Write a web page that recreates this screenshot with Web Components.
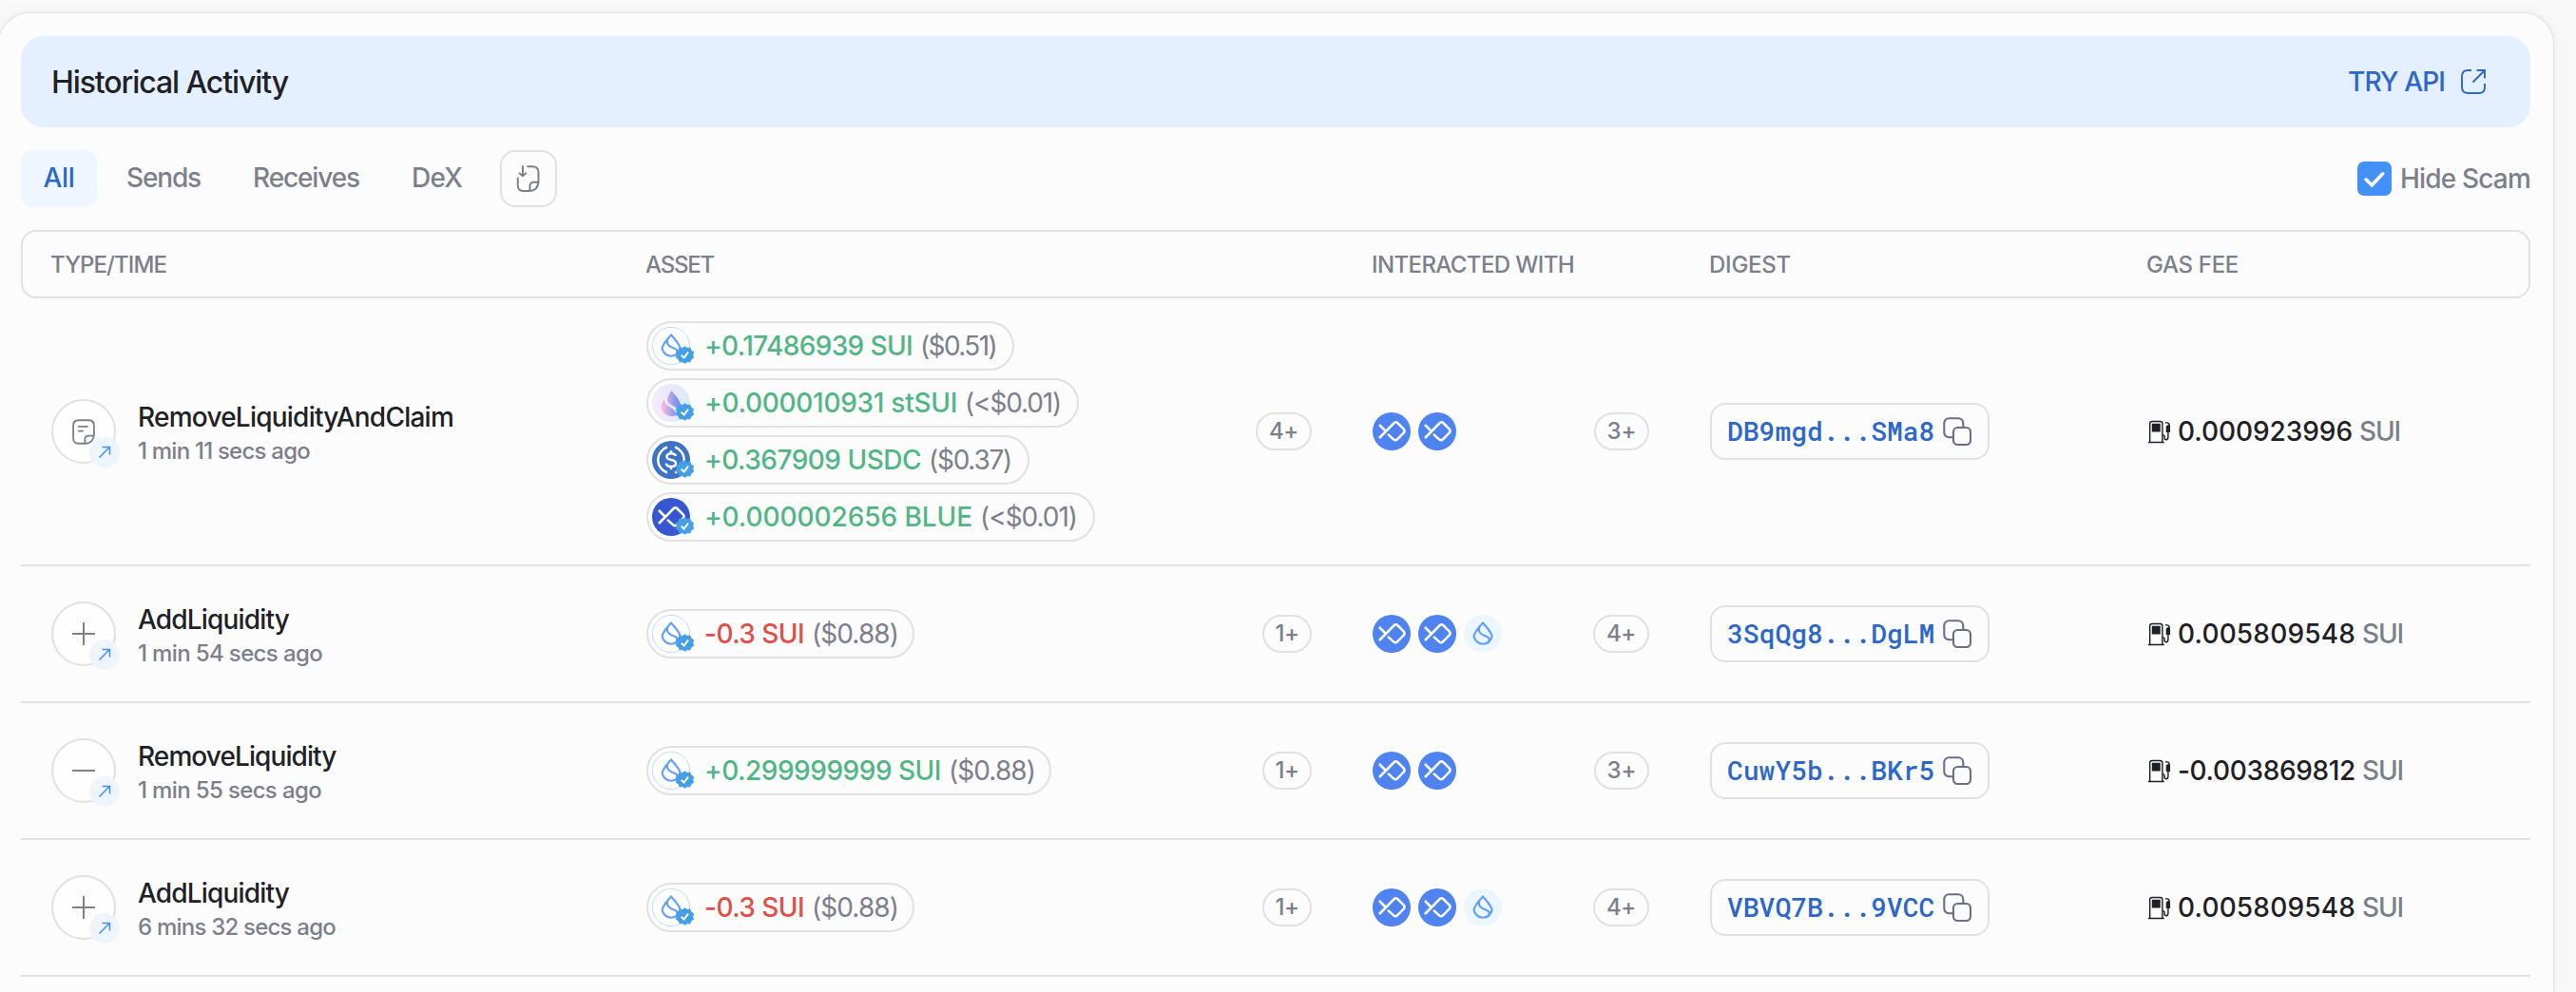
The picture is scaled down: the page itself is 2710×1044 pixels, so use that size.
<!DOCTYPE html>
<html lang="en">
<head>
<meta charset="utf-8">
<title>Historical Activity</title>
<style>
html{background:#f9f9fa}
body{margin:0;width:2710px;height:1044px;overflow:hidden;background:#f9f9fa;font-family:Inter,"Liberation Sans",sans-serif;font-weight:500;color:#1e2126}
</style>
</head>
<body>
<activity-panel></activity-panel>
<script>
const BLUE_FISH = `<path d="M7 13l7 7M7 27L22.800 11Q24.500 9.600 26.200 11L32.800 17.500Q34.400 19.500 32.800 21.500L26 28.300Q24 30 22 28.300L16 22.800" fill="none" stroke="#fff" stroke-width="2.500"/>`;
const DROP = `<path d="M20 8.300C16.500 12.900 11 18.100 10.600 22.700A9.600 9.400 0 0 0 29.600 22.700C29.200 18.100 23.500 12.900 20 8.300ZM16 13.500C14.500 22 24 21.500 26.300 24.500Q27.500 26.500 25.500 30" fill="none" stroke="#63a1f7" stroke-width="2.200" stroke-linejoin="round"/>`;
const ICONS = {
  note: ['0 0 28 32', `<g fill="none" stroke="#7d808b" stroke-width="2" stroke-linecap="round" stroke-linejoin="round"><path d="M8 2.500H20Q26 2.500 26 8.500V19C26 25 22 29.500 16 29.500H8Q2 29.500 2 23.500V8.500Q2 2.500 8 2.500Z"/><path d="M15.500 29.400V24.500Q15.500 20.500 19.500 20.500H25.800M8 9.700H18.500M8 15H13"/></g>`],
  plus: ['0 0 24 24', `<path d="M12 .8V23.200M.8 12H23.200" stroke="#7d808b" stroke-width="2" stroke-linecap="round"/>`],
  minus: ['0 0 24 24', `<path d="M.8 12H23.200" stroke="#7d808b" stroke-width="2" stroke-linecap="round"/>`],
  arrow: ['0 0 32 32', `<circle cx="16" cy="16" r="16" fill="#eef5ff"/><path d="M10.500 21.500L21.300 10.500M13.500 10.500H21.500V18.500" fill="none" stroke="#418ff5" stroke-width="1.500"/>`],
  external: ['0 0 28 28', `<g fill="none" stroke="#2d67c8" stroke-width="1.900"><path d="M12 2H8.500Q2 2 2 8.500V20Q2 26 8.500 26H20Q26 26 26 20V16M17.500 2H26V10.500M26 2L13.500 14.500"/></g>`],
  check: ['0 0 36 36', `<rect width="36" height="36" rx="7" fill="#4290f8"/><path d="M9 18.800L15.200 25L26.700 12.800" fill="none" stroke="#fff" stroke-width="3.600" stroke-linecap="round"/>`],
  importNote: ['0 0 32 32', `<g fill="none" stroke="#7d808b" stroke-width="2.100" stroke-linecap="round" stroke-linejoin="round"><path d="M15 2.500H20Q27.200 2.500 27.200 9V18C27.200 25 24 29.800 16 29.800H10Q4 29.800 4 24V15.500M17.500 29.400V25Q17.500 20 22 20H27M9.500 2V12M6 10L9.500 13L13 10"/></g>`],
  copy: ['0 0 32 32', `<g fill="#fcfcfc" stroke="#6b6e86" stroke-width="2.100"><rect x="2.300" y="2.300" width="20" height="20" rx="5"/><rect x="12" y="12" width="18" height="18" rx="4.500"/></g>`],
  gas: ['0 0 26 26', `<g fill="none" stroke="#1e2126" stroke-width="1.500"><path d="M1 24.400H18.500M2.800 24V4Q2.800 1.500 5.300 1.500H14Q16.500 1.500 16.500 4V24M16.500 16.500H17.500Q18.800 16.500 18.800 18V19.500Q18.800 21.500 20.800 21.500Q22.800 21.500 22.800 18.500V13M19.500 3H21.500Q24 3 24 6"/></g><path d="M5 4H14.300V13H5ZM20.500 7L22 5.500H25V13.500H20.500Z" fill="#1e2126"/>`],
  fish: ['0 0 40 40', `<circle cx="20" cy="20" r="20" fill="#4f83ef"/>${BLUE_FISH}`],
  drop: ['0 0 40 40', `<circle cx="20" cy="20" r="20" fill="#ebf6ff"/>${DROP}`],
  sui: ['0 0 40 40', `<circle cx="20" cy="20" r="19.600" fill="#fff" stroke="#a8ccfb" stroke-width=".7"/>${DROP}`],
  stsui: ['0 0 40 40', `<defs><linearGradient id="b"><stop stop-color="#f8eaf9"/><stop offset="1" stop-color="#d8eafd"/></linearGradient><linearGradient id="d"><stop offset=".1" stop-color="#efb6e6"/><stop offset=".8" stop-color="#7c93ea"/></linearGradient></defs><circle cx="20" cy="20" r="20" fill="url(#b)"/><path d="M20.500 7C25 12.500 32 20 30.500 26.500C29 31 27 32 27 29C26.500 22 16 23 16 17C16 13 18 11 20.500 7ZM13 16C13 26 25 23 25.500 33C18 36 10 31 9.700 25C9.500 21.500 11 19 13 16Z" fill="url(#d)"/>`],
  usdc: ['0 0 40 40', `<circle cx="20" cy="20" r="20" fill="#3e73c4"/><g fill="none" stroke="#fff" stroke-width="2.500"><path d="M16 6.500A14.200 14.200 0 0 0 16 33.500M24 6.500A14.200 14.200 0 0 1 24 33.500"/><path d="M25 15.800Q24.300 13.200 20 13.200Q15.500 13.200 15.500 16.500Q15.500 19.300 20 19.900Q25 20.500 25 23.700Q25 27 20 27Q15.200 27 14.800 23.700M20 10V13M20 27V30.300"/></g>`],
  blue: ['0 0 40 40', `<circle cx="20" cy="20" r="20" fill="#3757d0"/>${BLUE_FISH}`],
  verified: ['0 0 20 20', `<path d="M10 .8L12.600 2.500L15.700 2.200L16.800 5.100L19.500 6.800L18.700 10L19.500 13.200L16.800 14.900L15.700 17.800L12.600 17.500L10 19.200L7.400 17.500L4.300 17.800L3.200 14.900L.5 13.200L1.300 10L.5 6.800L3.200 5.100L4.300 2.200L7.400 2.500Z" fill="#459fe4" stroke="#459fe4" stroke-linejoin="round"/><path d="M6 10.300L9 13.200L13.700 7" fill="none" stroke="#fff" stroke-width="2"/>`]
};

class UiIcon extends HTMLElement {
  connectedCallback() {
    const [box, art] = ICONS[this.getAttribute('name')];
    this.attachShadow({mode: 'open'}).innerHTML = `<style>:host{display:block;flex:none}svg{display:block;width:100%;height:100%;overflow:visible}</style><svg viewBox="${box}">${art}</svg>`;
  }
}

/* A single line of text tracked so that its advance equals the w attribute. */
class UiText extends HTMLElement {
  connectedCallback() {
    const root = this.attachShadow({mode: 'open'});
    root.innerHTML = `<style>:host{display:block;flex:none;white-space:pre}span{display:inline-block}</style><span><slot></slot></span>`;
    const span = root.querySelector('span');
    const want = +this.getAttribute('w');
    if (!want) return;
    const spacing = (want - span.getBoundingClientRect().width) / this.textContent.length;
    span.style.letterSpacing = spacing.toFixed(3) + 'px';
    this.style.width = want + 'px';
  }
}

class CountPill extends HTMLElement {
  connectedCallback() {
    this.attachShadow({mode: 'open'}).innerHTML = `<style>:host{display:flex;box-sizing:border-box;flex:none;height:40px;border:2px solid #e1e1e1;border-radius:20px;align-items:center;justify-content:center;font-size:24px;line-height:30px;color:#7d808b;width:${this.getAttribute('w')}px}</style><ui-text w="${this.textContent[0] === '1' ? 25 : 31}">${this.textContent}</ui-text>`;
  }
}

class AssetChip extends HTMLElement {
  connectedCallback() {
    const a = n => this.getAttribute(n);
    this.attachShadow({mode: 'open'}).innerHTML = `<style>
:host{display:flex;box-sizing:border-box;height:52px;width:${a('w')}px;border:2px solid #e1e1e1;border-radius:26px;align-items:center;padding-left:4px;font-size:28px;line-height:34px}
.coin{position:relative;margin-right:15px}.coin>ui-icon{width:40px;height:40px}
.coin .v{position:absolute;width:19px;height:19px;right:-3.500px;bottom:1px}
.amt{color:${a('amount')[0] === '+' ? '#52b586' : '#de5049'}}.usd{color:#7d808b;font-weight:400;margin-left:8px}</style>
<div class="coin"><ui-icon name="${a('coin')}"></ui-icon><ui-icon class="v" name="verified"></ui-icon></div>
<ui-text class="amt" w="${a('aw')}">${a('amount')}</ui-text><ui-text class="usd" w="${a('uw')}">${a('usd')}</ui-text>`;
  }
}

class DigestBox extends HTMLElement {
  connectedCallback() {
    this.attachShadow({mode: 'open'}).innerHTML = `<style>
:host{display:flex;box-sizing:border-box;width:294px;height:60px;border:2px solid #e1e1e1;border-radius:16px;align-items:center;justify-content:space-between;padding:0 16px;font:500 28px/34px "Roboto Mono","Liberation Mono",monospace;color:#2d67c8}
ui-icon{width:32px;height:32px}</style><ui-text w="218.400">${this.getAttribute('value')}</ui-text><ui-icon name="copy"></ui-icon>`;
  }
}

class ActivityRow extends HTMLElement {
  set data(d) {
    this.attachShadow({mode: 'open'}).innerHTML = `<style>
:host{display:grid;grid-template-columns:658px 700px 64px 355px 460px 1fr;box-sizing:border-box;align-items:center;min-height:144px;border-bottom:2px solid #e1e1e1;padding:24px 0;margin:0}
:host>*{min-width:0}
.type{display:flex;gap:23px;align-items:center;padding-left:32px}
.ring{position:relative;box-sizing:border-box;width:68px;height:68px;border:2px solid #e1e1e1;border-radius:50%;background:#fefefe;display:flex;align-items:center;justify-content:center}
.main{width:24px;height:24px}.main.note{width:26px;height:29px}
.go{position:absolute;width:32px;height:32px;right:-6px;bottom:-6px}
.labels{display:flex;flex-direction:column;padding-top:3px}
.name{font-size:28px;line-height:38px}.time{font-size:24px;line-height:34px;color:#7d808b}
.chips{display:flex;flex-direction:column;gap:8px}
.asset{display:flex;align-items:center;justify-content:space-between}
.with{display:flex;align-items:center;gap:8px;width:291px}.with ui-icon{width:40px;height:40px}.with count-pill{margin-left:auto}
.gas{display:flex;align-items:center;font-size:28px;line-height:34px}.gas ui-icon{width:25px;height:25px;margin-right:7px}
.unit{color:#7d808b;margin-left:7px}</style>
<div class="type"><div class="ring"><ui-icon class="main ${d.icon}" name="${d.icon}"></ui-icon><ui-icon class="go" name="arrow"></ui-icon></div>
<div class="labels"><ui-text class="name" w="${d.nw}">${d.name}</ui-text><ui-text class="time" w="${d.tw}">${d.time}</ui-text></div></div>
<div class="asset"><div class="chips">${d.chips.map(c => `<asset-chip coin="${c[0]}" amount="${c[1]}" usd="${c[2]}" aw="${c[3]}" uw="${c[4]}" w="${c[5]}"></asset-chip>`).join('')}</div><count-pill w="${d.n1 === '4+' ? 59 : 52}">${d.n1}</count-pill></div>
<i></i>
<div class="with">${d.apps.map(a => `<ui-icon name="${a}"></ui-icon>`).join('')}<count-pill w="${d.n2 === '4+' ? 59 : 58}">${d.n2}</count-pill></div>
<digest-box value="${d.digest}"></digest-box>
<div class="gas"><ui-icon name="gas"></ui-icon><ui-text w="${d.gw}">${d.gas}</ui-text><ui-text class="unit" w="43">SUI</ui-text></div>`;
  }
}

const ROWS = [
  {icon: 'note', name: 'RemoveLiquidityAndClaim', nw: 332, time: '1 min 11 secs ago', tw: 181,
   chips: [['sui', '+0.17486939 SUI', '($0.51)', 219, 80, 387], ['stsui', '+0.000010931 stSUI', '(&lt;$0.01)', 266, 101, 455], ['usdc', '+0.367909 USDC', '($0.37)', 228, 87, 403], ['blue', '+0.000002656 BLUE', '(&lt;$0.01)', 282, 102, 472]],
   n1: '4+', apps: ['fish', 'fish'], n2: '3+', digest: 'DB9mgd...SMa8', gas: '0.000923996', gw: 184},
  {icon: 'plus', name: 'AddLiquidity', nw: 159, time: '1 min 54 secs ago', tw: 194,
   chips: [['sui', '-0.3 SUI', '($0.88)', 105, 91, 282]],
   n1: '1+', apps: ['fish', 'fish', 'drop'], n2: '4+', digest: '3SqQg8...DgLM', gas: '0.005809548', gw: 187},
  {icon: 'minus', name: 'RemoveLiquidity', nw: 208.5, time: '1 min 55 secs ago', tw: 193,
   chips: [['sui', '+0.299999999 SUI', '($0.88)', 249, 91, 426]],
   n1: '1+', apps: ['fish', 'fish'], n2: '3+', digest: 'CuwY5b...BKr5', gas: '-0.003869812', gw: 187},
  {icon: 'plus', name: 'AddLiquidity', nw: 159, time: '6 mins 32 secs ago', tw: 208,
   chips: [['sui', '-0.3 SUI', '($0.88)', 105, 91, 282]],
   n1: '1+', apps: ['fish', 'fish', 'drop'], n2: '4+', digest: 'VBVQ7B...9VCC', gas: '0.005809548', gw: 187}
];

class ActivityPanel extends HTMLElement {
  connectedCallback() {
    this.attachShadow({mode: 'open'}).innerHTML = `<style>
:host{display:flow-root;height:1044px;overflow:hidden}
.panel{box-sizing:border-box;width:2689px;height:1031px;margin:13px 0 0 -2px;padding:24px 24px 0 23px;border:1px solid #e4e4e5;border-bottom:0;border-radius:33px 33px 0 0;background:#fcfcfc;box-shadow:0 0 24px rgba(20,22,30,.035),0 0 3px rgba(0,0,0,.08)}
.banner{display:flex;align-items:center;height:96px;box-sizing:border-box;border-radius:24px;background:#e4f0ff;padding:0 46px 0 32px}
.title{font-size:32px;line-height:40px;padding-top:2px}
.api{display:flex;align-items:center;gap:16px;margin-left:auto;color:#2d67c8;font-size:28px;line-height:34px}
.api ui-icon{width:28px;height:28px}
.tabs{display:flex;align-items:center;margin:24px 0;height:60px;font-size:28px;line-height:34px;color:#7d808b}
.tab{display:flex;box-sizing:border-box;align-items:center;justify-content:center;height:60px;padding-bottom:3px}
.all{width:80px;background:#f0f6ff;border-radius:12px;color:#2d67c8;margin-right:31px}
.gap{margin-left:55px}
.save{display:flex;box-sizing:border-box;align-items:center;justify-content:center;width:60px;height:60px;border:2px solid #e1e1e1;border-radius:16px;margin-left:40px}
.save ui-icon{width:30px;height:30px}
.scam{display:flex;align-items:center;gap:9px;margin-left:auto}.scam ui-icon{width:36px;height:36px}
.head{display:grid;grid-template-columns:658px 764px 355px 460px 1fr;align-items:center;box-sizing:border-box;height:72px;border:2px solid #e1e1e1;border-radius:16px;font-size:24px;line-height:30px;color:#7d808b;padding-top:2px}
.head>*{margin-left:-3px}.head>:first-child{padding-left:32px}
</style>
<div class="panel">
<div class="banner"><ui-text class="title" w="249">Historical Activity</ui-text><div class="api"><ui-text w="102">TRY API</ui-text><ui-icon name="external"></ui-icon></div></div>
<div class="tabs"><div class="tab all"><ui-text w="33">All</ui-text></div><div class="tab"><ui-text w="78">Sends</ui-text></div><div class="tab gap"><ui-text w="112">Receives</ui-text></div><div class="tab gap"><ui-text w="53">DeX</ui-text></div><div class="save"><ui-icon name="importNote"></ui-icon></div>
<div class="scam"><ui-icon name="check"></ui-icon><ui-text w="137">Hide Scam</ui-text></div></div>
<div class="head"><ui-text w="122">TYPE/TIME</ui-text><ui-text w="72">ASSET</ui-text><ui-text w="213">INTERACTED WITH</ui-text><ui-text w="86">DIGEST</ui-text><ui-text w="97">GAS FEE</ui-text></div>
<div class="rows"></div>
</div>`;
    for (const d of ROWS) {
      const row = document.createElement('activity-row');
      row.data = d;
      this.shadowRoot.querySelector('.rows').append(row);
    }
  }
}
customElements.define('ui-icon', UiIcon);
customElements.define('ui-text', UiText);
customElements.define('count-pill', CountPill);
customElements.define('asset-chip', AssetChip);
customElements.define('digest-box', DigestBox);
customElements.define('activity-row', ActivityRow);
customElements.define('activity-panel', ActivityPanel);
</script>
</body>
</html>
